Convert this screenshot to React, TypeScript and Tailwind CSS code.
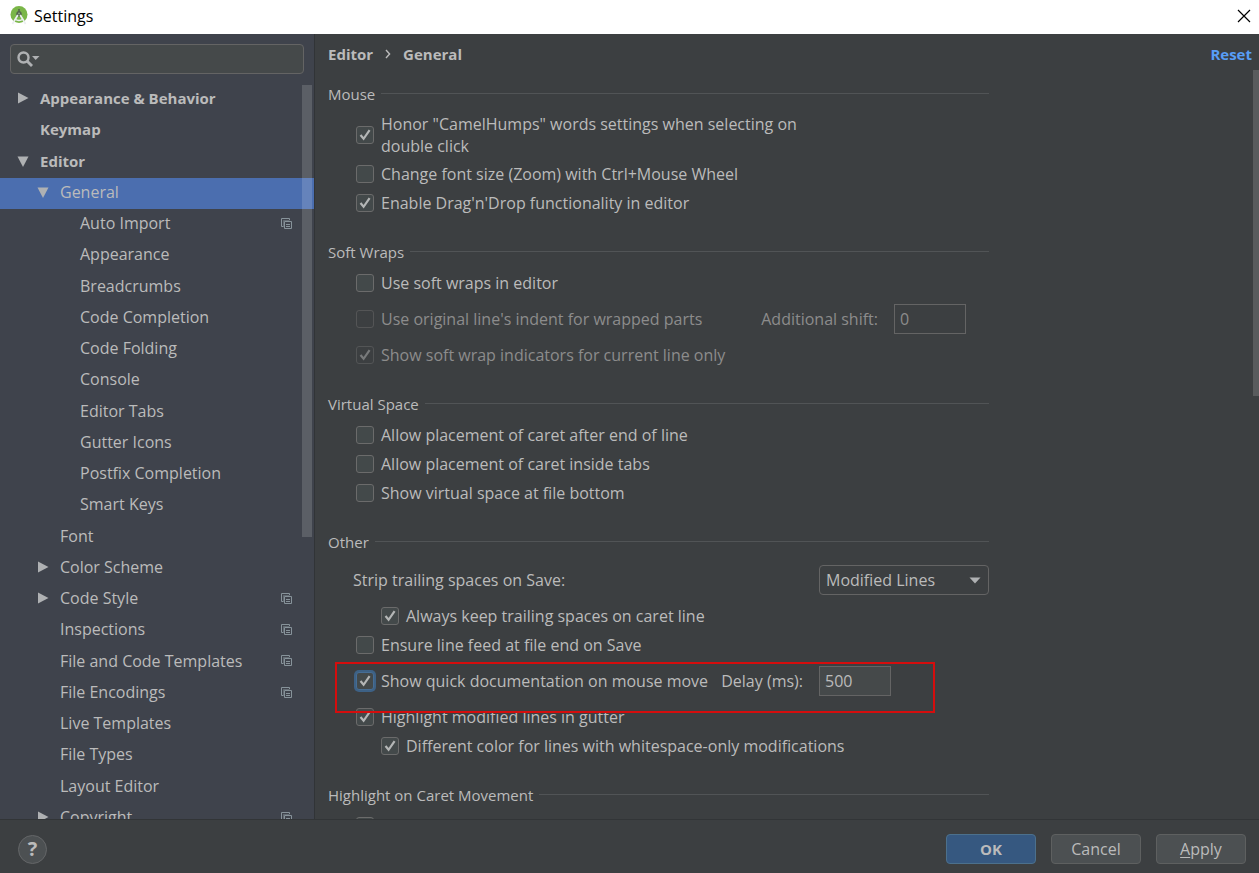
import React, { useState } from 'react';

type TreeItem = {
  label: string;
  level: 0 | 1 | 2;
  arrow?: 'open' | 'closed';
  perProject?: boolean;
};

const treeItems: TreeItem[] = [
  { label: 'Appearance & Behavior', level: 0, arrow: 'closed' },
  { label: 'Keymap', level: 0 },
  { label: 'Editor', level: 0, arrow: 'open' },
  { label: 'General', level: 1, arrow: 'open' },
  { label: 'Auto Import', level: 2, perProject: true },
  { label: 'Appearance', level: 2 },
  { label: 'Breadcrumbs', level: 2 },
  { label: 'Code Completion', level: 2 },
  { label: 'Code Folding', level: 2 },
  { label: 'Console', level: 2 },
  { label: 'Editor Tabs', level: 2 },
  { label: 'Gutter Icons', level: 2 },
  { label: 'Postfix Completion', level: 2 },
  { label: 'Smart Keys', level: 2 },
  { label: 'Font', level: 1 },
  { label: 'Color Scheme', level: 1, arrow: 'closed' },
  { label: 'Code Style', level: 1, arrow: 'closed', perProject: true },
  { label: 'Inspections', level: 1, perProject: true },
  { label: 'File and Code Templates', level: 1, perProject: true },
  { label: 'File Encodings', level: 1, perProject: true },
  { label: 'Live Templates', level: 1 },
  { label: 'File Types', level: 1 },
  { label: 'Layout Editor', level: 1 },
  { label: 'Copyright', level: 1, arrow: 'closed', perProject: true },
];

const levelClasses = {
  0: 'pl-[17px] text-[15px] font-bold',
  1: 'pl-[37px]',
  2: 'pl-[57px]',
};

function AppLogo() {
  return <svg width="18" height="19" viewBox="0 0 18 19" aria-hidden="true">
      <circle cx="9" cy="8.5" r="8.5" fill="#7ab648" />
      <path d="M6.2 8.5 Q6.2 5 9 5 Q11.8 5 11.8 8.5 L10.6 10.5 H7.4 Z" fill="#55664d" />
      <path d="M9 3 V6" stroke="#55664d" strokeWidth="1.6" />
      <path d="M7.8 9 L2.4 18 M10.2 9 L15.6 18" stroke="#eceff1" strokeWidth="1.7" fill="none" />
      <path d="M4.8 13 Q9 16 13.2 13" stroke="#eceff1" strokeWidth="1.5" fill="none" />
      <circle cx="9" cy="7.6" r="1" fill="#8fa886" />
    </svg>;
}

function Arrow({ kind }: { kind: 'open' | 'closed' }) {
  return <svg width="12" height="12" viewBox="0 0 12 12" fill="#afb1b3" aria-hidden="true">
      {kind === 'open' ? <path d="M0.5 1.5 H11.5 L6 12 Z" /> : <path d="M1 0.5 V11.5 L11.5 6 Z" />}
    </svg>;
}

function ProjectIcon() {
  return <svg width="11" height="11" viewBox="0 0 11 11" fill="none" stroke="#87939a" aria-hidden="true">
      <path d="M2.5 8.5 H0.5 V0.5 H8.5 V2" />
      <path d="M2.5 8.5 V2.5 H8.5" strokeOpacity="0.5" />
      <path d="M3.5 3.5 H10.5 V10.5 H3.5 Z" />
      <path d="M5 6.5 H9 M5 8.5 H9" />
    </svg>;
}

function Section({ title, children }: { title: string; children: React.ReactNode }) {
  return <fieldset className="mb-[25px]">
      <legend className="mb-[6px] flex h-5 w-full gap-[6px] text-[15px] leading-5">
        {title}
        <span className="mt-[9px] h-px flex-1 bg-[#515456]" />
      </legend>
      {children}
    </fieldset>;
}

type CheckRowProps = {
  id: string;
  label: string;
  checked?: boolean;
  disabled?: boolean;
  focused?: boolean;
  nested?: boolean;
  size?: 'normal' | 'tall' | 'double';
  children?: React.ReactNode;
};

const rowHeights = {
  normal: 'h-[29px]',
  tall: 'h-[43px]',
  double: 'h-[49px]',
};

function CheckRow({ id, label, checked, disabled, focused, nested, size = 'normal', children }: CheckRowProps) {
  return <div className={`relative flex items-center ${nested ? 'pl-[53px]' : 'pl-7'} ${rowHeights[size]}`}>
      <span className={`grid h-[18px] w-[18px] shrink-0 ${disabled ? 'opacity-50' : ''}`}>
        <input id={id} type="checkbox" defaultChecked={checked} disabled={disabled} className={`peer col-start-1 row-start-1 h-[18px] w-[18px] appearance-none rounded-[3px] border ${focused ? 'border-[#466d94] ring-2 ring-[#3d6185]' : 'border-[#6b6b6b]'} ${disabled ? 'bg-transparent' : 'bg-[#43494a]'}`} />
        <svg width="18" height="18" viewBox="0 0 18 18" fill="none" stroke="#b4b6b6" strokeWidth="2.2" className="pointer-events-none invisible col-start-1 row-start-1 peer-checked:visible" aria-hidden="true">
          <path d="M4.5 9 L7.6 12.8 L13.6 4.2" />
        </svg>
      </span>
      <label htmlFor={id} className={`ml-[7px] leading-[22px] ${size === 'double' ? 'max-w-[430px]' : 'whitespace-nowrap'} ${disabled ? 'text-[#8c8c8c]' : ''}`}>
        {label}
      </label>
      {children}
    </div>;
}

function Sidebar() {
  const [selected, setSelected] = useState('General');
  return <aside className="relative flex w-[315px] shrink-0 flex-col border-r border-[#313437] bg-[#3f434c] pt-[10px]">
      <div className="mr-[10px] ml-[10px] flex h-[30px] items-center rounded border border-[#646464] bg-[#45494a] pl-[6px]">
        <svg width="23" height="17" viewBox="0 0 23 17" aria-hidden="true">
          <circle cx="6.5" cy="6.5" r="5" fill="none" stroke="#afb1b3" strokeWidth="2.4" />
          <path d="M10 10 L15 15" stroke="#afb1b3" strokeWidth="2.8" />
          <path d="M15 5 H22.5 L18.7 9 Z" fill="#afb1b3" />
        </svg>
        <input type="text" aria-label="Search settings" className="h-full min-w-0 flex-1 bg-transparent px-1 outline-none" />
      </div>
      <ul className="mt-[10px] min-h-0 flex-1 overflow-hidden">
        {treeItems.map((item, index) => <li key={index} className="h-[31px] nth-[4n+3]:h-8">
            <button type="button" onClick={() => setSelected(item.label)} className={`flex h-full w-full items-center pr-[22px] pb-[3px] text-left ${levelClasses[item.level]} ${selected === item.label ? 'bg-[#4b6eaf]' : ''}`}>
              <span className="mr-[11px] w-3 shrink-0">
                {item.arrow && <Arrow kind={item.arrow} />}
              </span>
              <span className="flex-1">{item.label}</span>
              {item.perProject && <ProjectIcon />}
            </button>
          </li>)}
      </ul>
      <div className="absolute top-[51px] right-[2px] h-[452px] w-[10px] bg-white/15" />
    </aside>;
}

function GeneralPage() {
  return <main className="relative flex min-w-0 flex-1 flex-col overflow-hidden pl-[13px]">
      <header className="flex h-10 shrink-0 items-center justify-between pr-[7px] text-[15px] font-bold">
        <nav aria-label="Breadcrumb" className="flex items-center">
          <span>Editor</span>
          <svg width="6" height="10" viewBox="0 0 6 10" fill="none" stroke="#bbbbbb" strokeWidth="1.4" className="mx-3" aria-hidden="true">
            <path d="M1 1 L4.6 5 L1 9" />
          </svg>
          <span>General</span>
        </nav>
        <a href="#reset" className="text-[#589df6]">Reset</a>
      </header>
      <form className="mt-[10px] min-h-0 w-full max-w-[661px] flex-1">
        <Section title="Mouse">
          <CheckRow id="camel-humps" label={'Honor "CamelHumps" words settings when selecting on double click'} checked size="double" />
          <CheckRow id="zoom" label="Change font size (Zoom) with Ctrl+Mouse Wheel" />
          <CheckRow id="drag-drop" label="Enable Drag'n'Drop functionality in editor" checked />
        </Section>
        <Section title="Soft Wraps">
          <CheckRow id="soft-wraps" label="Use soft wraps in editor" />
          <CheckRow id="original-indent" label="Use original line's indent for wrapped parts" disabled size="tall">
            <label htmlFor="shift" className="mr-4 ml-auto text-[#8c8c8c]">Additional shift:</label>
            <input id="shift" type="text" defaultValue="0" disabled className="mr-[23px] h-[30px] w-[72px] border border-[#646464] px-[5px] text-[#8c8c8c]" />
          </CheckRow>
          <CheckRow id="wrap-indicators" label="Show soft wrap indicators for current line only" checked disabled />
        </Section>
        <Section title="Virtual Space">
          <CheckRow id="caret-eol" label="Allow placement of caret after end of line" />
          <CheckRow id="caret-tabs" label="Allow placement of caret inside tabs" />
          <CheckRow id="virtual-bottom" label="Show virtual space at file bottom" />
        </Section>
        <Section title="Other">
          <div className="flex h-[43px] items-center justify-between pl-[25px]">
            <label htmlFor="strip">Strip trailing spaces on Save:</label>
            <div className="relative">
              <select id="strip" className="h-[30px] w-[170px] appearance-none rounded border border-[#646464] bg-[#3c3f41] px-[6px]">
                <option>Modified Lines</option>
                <option>All</option>
                <option>None</option>
              </select>
              <svg width="12" height="7" viewBox="0 0 12 7" fill="#afb1b3" className="pointer-events-none absolute top-3 right-2" aria-hidden="true">
                <path d="M0.5 0.5 H11.5 L6 6.5 Z" />
              </svg>
            </div>
          </div>
          <CheckRow id="keep-trailing" label="Always keep trailing spaces on caret line" checked nested />
          <CheckRow id="line-feed" label="Ensure line feed at file end on Save" />
          <CheckRow id="quick-doc" label="Show quick documentation on mouse move" checked focused size="tall">
            <label htmlFor="delay" className="mr-4 ml-auto">Delay (ms):</label>
            <input id="delay" type="text" defaultValue="500" className="mr-[98px] h-[30px] w-[72px] border border-[#646464] bg-[#45494a] px-[5px]" />
            <div className="pointer-events-none absolute top-[3px] left-[7px] z-10 h-[51px] w-[600px] border-2 border-[#d50d0d]" />
          </CheckRow>
          <CheckRow id="modified-lines" label="Highlight modified lines in gutter" checked />
          <CheckRow id="whitespace-color" label="Different color for lines with whitespace-only modifications" checked nested />
        </Section>
        <Section title="Highlight on Caret Movement">
          <CheckRow id="matched-brace" label="" />
        </Section>
      </form>
      <div className="absolute top-9 right-0 h-[326px] w-[6px] bg-[#595b5d]" />
    </main>;
}

export default function App() {
  return <div className="flex h-screen flex-col bg-[#3c3f41] font-['Open_Sans','Noto_Sans',sans-serif] text-[16px] leading-5 text-[#bbbbbb]">
      <div className="flex h-[34px] shrink-0 items-center bg-white pb-[3px] pl-[10px] text-black">
        <AppLogo />
        <h1 className="ml-[6px] flex-1">Settings</h1>
        <button type="button" aria-label="Close" className="mr-2">
          <svg width="14" height="14" viewBox="0 0 14 14" stroke="#000000" strokeWidth="1.2" aria-hidden="true">
            <path d="M1 1 L13 13 M13 1 L1 13" />
          </svg>
        </button>
      </div>
      <div className="flex min-h-0 flex-1">
        <Sidebar />
        <GeneralPage />
      </div>
      <footer className="flex h-[54px] shrink-0 items-center gap-[15px] border-t border-[#323537] pt-[5px] pr-[13px] pl-[18px]">
        <button type="button" aria-label="Help" className="mr-auto h-[29px] w-[29px] rounded-full border border-[#646668] bg-[#4c5052] text-[20px] leading-6 font-bold">
          ?
        </button>
        <button type="button" className="h-[30px] w-[90px] rounded border border-[#4c708c] bg-[#365880] text-[15px] font-bold">OK</button>
        <button type="button" className="h-[30px] w-[90px] rounded border border-[#5e6060] bg-[#4c5052]">Cancel</button>
        <button type="button" className="h-[30px] w-[90px] rounded border border-[#5e6060] bg-[#4c5052]"><u className="underline-offset-2">A</u>pply</button>
      </footer>
    </div>;
}
